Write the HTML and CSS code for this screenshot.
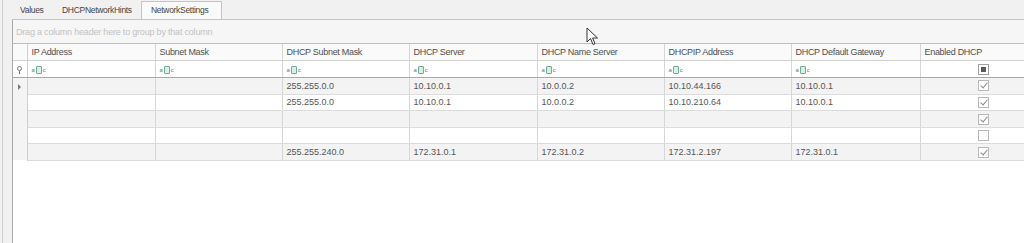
FILE: index.html
```html
<!DOCTYPE html>
<html lang="en">
<head>
  <meta charset="UTF-8">
  <title>NetworkSettings</title>
  <link rel="stylesheet" href="styles.css">
</head>
<body>
  <div class="shell">
    <div class="rail"></div>
    <div class="main">
      <div class="tabs">
        <span class="tab tab-values">Values</span>
        <span class="tab tab-hints">DHCPNetworkHints</span>
        <span class="tab tab-settings active">NetworkSettings</span>
      </div>
      <div class="panel">
        <div class="group-panel">Drag a column header here to group by that column</div>
        <table class="grid">
          <colgroup>
            <col class="c-ind">
            <col class="c-128"><col class="c-127"><col class="c-127"><col class="c-128">
            <col class="c-127"><col class="c-127"><col class="c-129"><col class="c-127">
          </colgroup>
          <thead>
            <tr class="head">
              <th class="ind"></th>
              <th>IP Address</th>
              <th>Subnet Mask</th>
              <th>DHCP Subnet Mask</th>
              <th>DHCP Server</th>
              <th>DHCP Name Server</th>
              <th>DHCPIP Address</th>
              <th>DHCP Default Gateway</th>
              <th>Enabled DHCP</th>
            </tr>
            <tr class="filter">
              <td class="ind"><span class="pin"></span></td>
              <td><span class="abc"><i>a</i><b></b><i>c</i></span></td>
              <td><span class="abc"><i>a</i><b></b><i>c</i></span></td>
              <td><span class="abc"><i>a</i><b></b><i>c</i></span></td>
              <td><span class="abc"><i>a</i><b></b><i>c</i></span></td>
              <td><span class="abc"><i>a</i><b></b><i>c</i></span></td>
              <td><span class="abc"><i>a</i><b></b><i>c</i></span></td>
              <td><span class="abc"><i>a</i><b></b><i>c</i></span></td>
              <td class="chk"><span class="box mixed"></span></td>
            </tr>
          </thead>
          <tbody>
            <tr>
              <td class="ind"><span class="arrow"></span></td>
              <td></td><td></td>
              <td>255.255.0.0</td><td>10.10.0.1</td><td>10.0.0.2</td>
              <td>10.10.44.166</td><td>10.10.0.1</td>
              <td class="chk"><span class="box checked"></span></td>
            </tr>
            <tr>
              <td class="ind"></td>
              <td></td><td></td>
              <td>255.255.0.0</td><td>10.10.0.1</td><td>10.0.0.2</td>
              <td>10.10.210.64</td><td>10.10.0.1</td>
              <td class="chk"><span class="box checked"></span></td>
            </tr>
            <tr>
              <td class="ind"></td>
              <td></td><td></td><td></td><td></td><td></td><td></td><td></td>
              <td class="chk"><span class="box checked"></span></td>
            </tr>
            <tr>
              <td class="ind"></td>
              <td></td><td></td><td></td><td></td><td></td><td></td><td></td>
              <td class="chk"><span class="box"></span></td>
            </tr>
            <tr>
              <td class="ind"></td>
              <td></td><td></td>
              <td>255.255.240.0</td><td>172.31.0.1</td><td>172.31.0.2</td>
              <td>172.31.2.197</td><td>172.31.0.1</td>
              <td class="chk"><span class="box checked"></span></td>
            </tr>
          </tbody>
        </table>
      </div>
    </div>
  </div>

  <svg class="cursor" width="13" height="20" viewBox="0 0 13 20">
    <path d="M1 1 L1 15 L4.5 11.5 L7 17.5 L9 16.6 L6.6 11 L11.5 11 Z" fill="#fff" stroke="#333" stroke-width="1"/>
  </svg>
</body>
</html>
```

FILE: styles.css
```css
body {
  margin: 0;
  background-color: #f1f1f1;
  font-family: "Liberation Sans", Arial, sans-serif;
  font-size: 9px;
  color: #555;
  overflow: hidden;
}
.shell {
  display: flex;
  height: 243px;
}
.rail {
  width: 9px;
  border-left: 1px solid #cfcfcf;
  margin-left: 2px;
}
.main {
  flex: 1;
  display: flex;
  flex-direction: column;
  min-width: 0;
}
.tabs {
  height: 19px;
  display: flex;
  align-items: flex-end;
  padding-left: 2px;
}
.tab {
  height: 16px;
  line-height: 15px;
  padding-left: 6px;
  color: #444;
  font-size: 8.5px;
  letter-spacing: -0.3px;
  white-space: nowrap;
  box-sizing: border-box;
}
.tab-values { width: 42px; }
.tab-hints { width: 85px; }
.tab-settings { width: 81px; }
.tab.active {
  height: 18px;
  line-height: 17px;
  padding-left: 9px;
  background-color: #fafafa;
  border: 1px solid #c4c4c4;
  border-bottom: none;
}
.panel {
  flex: 1;
  background-color: #fff;
  border-left: 1px solid #a9a9a9;
  border-top: 1px solid #c4c4c4;
  overflow: hidden;
}
.group-panel {
  height: 24px;
  line-height: 25px;
  padding-left: 3px;
  background-color: #f6f6f6;
  color: #c2c2c2;
  letter-spacing: -0.2px;
  border-bottom: 1px solid #bdbdbd;
  box-sizing: border-box;
}
.grid {
  table-layout: fixed;
  border-collapse: collapse;
  width: 1033px;
}
.c-ind { width: 14px; }
.c-127 { width: 127px; }
.c-128 { width: 128px; }
.c-129 { width: 129px; }
.grid th, .grid td {
  padding: 0 0 0 4px;
  text-align: left;
  white-space: nowrap;
  overflow: hidden;
  border-right: 1px solid #d6d6d6;
}
.head th {
  height: 16px;
  font-weight: normal;
  color: #505050;
  background-color: #fafafa;
  letter-spacing: -0.3px;
  border-bottom: 1px solid #d0d0d0;
}
.filter td {
  height: 16px;
  border-bottom: 1px solid #a8a8a8;
}
tbody td {
  height: 15.6px;
  color: #555;
  border-bottom: 1px solid #dcdcdc;
}
tbody tr:nth-child(odd) td {
  background-color: #f3f3f3;
}
.grid .ind {
  padding: 0;
  text-align: center;
  border-right: 1px solid #cfcfcf;
}
tbody .ind, tbody tr:nth-child(odd) .ind {
  background-color: #f4f4f4;
  border-bottom: none;
}
.grid .chk {
  padding: 0;
  text-align: center;
}
.abc {
  display: inline-flex;
  align-items: center;
  height: 8px;
  vertical-align: middle;
}
.abc i {
  font-style: normal;
  font-size: 6px;
  color: #777;
  line-height: 6px;
}
.abc b {
  display: inline-block;
  width: 4px;
  height: 6px;
  margin: 0 1px;
  border: 1px solid #6fae95;
  background-color: #dcefe6;
  border-radius: 1px;
}
.pin {
  display: inline-block;
  width: 3px;
  height: 3px;
  border: 1px solid #777;
  border-radius: 50%;
  position: relative;
  top: -1px;
}
.pin::after {
  content: "";
  position: absolute;
  left: 1px;
  top: 4px;
  width: 1px;
  height: 3px;
  background-color: #777;
}
.arrow {
  display: inline-block;
  width: 0;
  height: 0;
  border-top: 3px solid transparent;
  border-bottom: 3px solid transparent;
  border-left: 3px solid #777;
  vertical-align: middle;
}
.box {
  display: inline-block;
  width: 9px;
  height: 9px;
  border: 1px solid #b8b8b8;
  background-color: #fff;
  vertical-align: middle;
  position: relative;
}
.box.mixed {
  border-color: #a0a0a0;
}
.box.mixed::after {
  content: "";
  position: absolute;
  left: 2px;
  top: 2px;
  width: 5px;
  height: 5px;
  background-color: #5a5a5a;
}
.box.checked::after {
  content: "";
  position: absolute;
  left: 3px;
  top: 0;
  width: 3px;
  height: 6px;
  border-right: 1px solid #8a8a8a;
  border-bottom: 1px solid #8a8a8a;
  transform: rotate(40deg);
}
.cursor {
  position: absolute;
  left: 586px;
  top: 27px;
}
```
